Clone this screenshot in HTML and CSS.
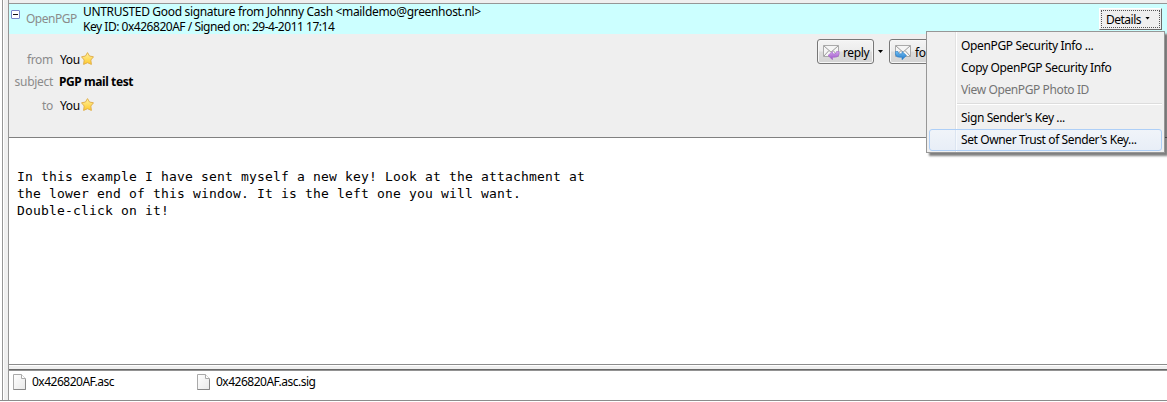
FILE: index.html
```html
<!DOCTYPE html>
<html lang="en">
<head>
<meta charset="utf-8">
<title>PGP mail test</title>
<link rel="stylesheet" href="styles.css">
</head>
<body>
<svg class="defs" width="0" height="0" aria-hidden="true">
  <defs>
    <linearGradient id="gold" x1="0" y1="0" x2="0" y2="1"><stop offset="0" stop-color="#fff2a0"/><stop offset="1" stop-color="#ffc928"/></linearGradient>
    <linearGradient id="purple" x1="0" y1="0" x2="0" y2="1"><stop offset="0" stop-color="#d3a5ec"/><stop offset="1" stop-color="#9a50c8"/></linearGradient>
    <linearGradient id="blue" x1="0" y1="0" x2="0" y2="1"><stop offset="0" stop-color="#72c0f2"/><stop offset="1" stop-color="#1f74c8"/></linearGradient>
    <linearGradient id="sheet" x1="0" y1="0" x2="1" y2="1"><stop offset="0" stop-color="#fff"/><stop offset="1" stop-color="#e9e9e9"/></linearGradient>
    <symbol id="star" viewBox="0 0 13 13"><path d="M6.500.6 8.500 4l4 .8-2.700 3.200.6 4.400-3.900-1.700-3.900 1.700.6-4.400L.5 4.800l4-.8z" fill="url(#gold)" stroke="#e0b050" stroke-width="1" stroke-linejoin="round"/></symbol>
    <symbol id="envelope" viewBox="0 0 17 15"><path d="M.5.500h15v11H.5z" fill="#f5f5f5" stroke="#aaa"/><path d="M.8.800 8 7.200 15.200.8M.8 11.200l5-5.500m9.400 5.500-5-5.500" fill="none" stroke="#999" stroke-width="1"/></symbol>
    <symbol id="file" viewBox="0 0 13 16"><path d="M.5.5h8l4 4v11H.5z" fill="url(#sheet)" stroke="#aaa"/><path d="M8.5.5v4h4" fill="#fff" stroke="#aaa"/><path d="M.5 15.5h12v-10" fill="none" stroke="#888"/></symbol>
  </defs>
</svg>
<div class="window">
  <div class="edge"></div>
  <main class="pane">
    <header class="security">
      <span class="toggle"></span>
      <span class="label pgp">OpenPGP</span>
      <div class="status">
        <div class="t-sign">UNTRUSTED Good signature from Johnny Cash &lt;maildemo@greenhost.nl&gt;</div>
        <div class="t-key">Key ID: 0x426820AF / Signed on: 29-4-2011 17:14</div>
      </div>
      <div class="details"><span class="t-details">Details</span><i class="caret"></i></div>
    </header>
    <section class="headers">
      <div class="fields">
        <div class="field from"><span class="label">from</span><span class="value">You</span><svg class="star" width="13" height="13"><use href="#star"/></svg></div>
        <div class="field subject"><span class="label">subject</span><b class="value">PGP mail test</b></div>
        <div class="field to"><span class="label">to</span><span class="value">You</span><svg class="star" width="13" height="13"><use href="#star"/></svg></div>
      </div>
      <div class="actions">
        <div class="button"><svg width="17" height="15" viewBox="0 0 17 15"><use href="#envelope" width="17" height="15"/><path d="m5 10.5 4.500-4v2.300h2.300q1.700 0 1.700-2.300h2.600q.8 5.700-4.300 5.700H9.500v2.500z" fill="url(#purple)" stroke="#a566ca" stroke-width=".6"/></svg><span>reply</span></div>
        <i class="caret"></i>
        <div class="button forward"><svg width="17" height="15" viewBox="0 0 17 15"><use href="#envelope" width="17" height="15"/><path d="M11.500 10.500 7 6.500v2.300H4.700Q3 8.800 3 6.500H.4q-.8 5.700 4.300 5.700H7v2.500z" fill="url(#blue)" stroke="#2b7ec7" stroke-width=".6"/></svg><span>forward</span></div>
      </div>
    </section>
    <article class="message">In this example I have sent myself a new key! Look at the attachment at
the lower end of this window. It is the left one you will want.
Double-click on it!</article>
    <div class="splitter"></div>
    <footer class="attachments">
      <div class="attachment"><svg width="13" height="16"><use href="#file"/></svg><span class="t-asc">0x426820AF.asc</span></div>
      <div class="attachment"><svg width="13" height="16"><use href="#file"/></svg><span class="t-asc">0x426820AF.asc.sig</span></div>
    </footer>
  </main>
  <nav class="menu">
    <div class="item"><span>OpenPGP Security Info ...</span></div>
    <div class="item"><span>Copy OpenPGP Security Info</span></div>
    <div class="item disabled"><span class="t-photo">View OpenPGP Photo ID</span></div>
    <hr>
    <div class="item"><span class="t-signkey">Sign Sender's Key ...</span></div>
    <div class="item active"><span class="t-trust">Set Owner Trust of Sender's Key...</span></div>
  </nav>
</div>
</body>
</html>
```
FILE: styles.css
```css
* { box-sizing: border-box; }
body { margin: 0; background: #fff; color: #000; font: 12px/15px "Noto Sans", "Open Sans", sans-serif; letter-spacing: -0.35px; overflow: hidden; }
.defs { position: absolute; }
.window { position: relative; display: flex; width: 1167px; height: 401px; border-bottom: 1px solid #8c8c8c; }
.edge { width: 8px; flex: none; border-left: 2px solid #fff; background: linear-gradient(90deg, #969696 1px, #fff 1px, #fff 2px, #efefef 2px); }
.pane { flex: 1; display: flex; flex-direction: column; min-width: 0; border-left: 1px solid #969696; box-shadow: inset 0 3px #efefef; padding-top: 3px; }
.security { display: flex; height: 31px; flex: none; border-top: 1px solid #969696; background: #cff; }
.toggle { width: 9px; height: 9px; margin: 6px 6px 0 2px; border: 1px solid #7886c8; border-radius: 1px; background: linear-gradient(#111, #111) center / 5px 1px no-repeat #fff; }
.label { color: #8b8b8b; }
.pgp { width: 57px; padding-top: 7px; letter-spacing: -0.5px; }
.status { flex: 1; line-height: 15px; white-space: nowrap; }
.t-sign { letter-spacing: -0.325px; }
.t-key { letter-spacing: -0.475px; }
.details { display: flex; align-items: center; gap: 4px; width: 63px; height: 22px; margin: 4px 5px 0 0; padding-left: 6px; border: 1px solid; border-color: #fff #696969 #696969 #fff; background: #efefef; outline: 1px dotted #555; outline-offset: -3px; }
.t-details { letter-spacing: -0.5px; }
.details .caret { margin-bottom: 2px; }
.caret { width: 5px; height: 3px; background: #000; clip-path: polygon(0 0, 100% 0, 50% 100%); }
.headers { display: flex; justify-content: space-between; height: 104px; flex: none; background: #efefef; border-bottom: 1px solid #808080; }
.fields { padding-top: 18px; }
.field { display: flex; height: 22px; }
.field .label { width: 44px; margin-right: 7px; text-align: right; letter-spacing: -0.3px; }
.subject { height: 24px; }
.subject .value { margin-left: -1px; letter-spacing: -0.42px; }
.star { margin: 0 0 0 1px; }
.actions { display: flex; width: 350px; padding-top: 5px; }
.button { display: flex; align-items: center; gap: 3px; width: 57px; height: 25px; padding: 2px 0 0 5px; border: 1px solid #777; border-radius: 3px; background: linear-gradient(#f4f4f4, #ececec 48%, #dcdcdc 52%, #d4d4d4); box-shadow: inset 0 0 0 1px #f7f7f7; }
.forward { width: 75px; }
.actions .caret { margin: 11px 6px 0 4px; }
.message { flex: none; height: 226px; padding: 30px 8px 0; white-space: pre; font: 13px/17px "DejaVu Sans Mono", monospace; letter-spacing: 0.173px; }
.splitter { height: 7px; flex: none; background: linear-gradient(#8c8c8c 1px, #fff 1px, #fff 2px, #efefef 2px, #efefef 5px, #686868 5px, #686868 6px, #929292 6px); }
.attachments { display: flex; padding: 3px 0 0 4px; }
.attachment { display: flex; gap: 6px; width: 184px; }
.t-asc { letter-spacing: -0.5px; }
.menu { position: absolute; left: 926px; top: 31px; width: 239px; height: 122px; padding: 3px 2px; border: 1px solid #979797; background: linear-gradient(90deg, transparent 28px, #e2e2e2 28px, #e2e2e2 29px, #fff 29px, #fff 30px, transparent 30px) #f0f0f0; box-shadow: 3px 3px 2px rgba(0, 0, 0, .5); }
.item { height: 22px; padding: 3px 0 0 32px; border: 0; white-space: nowrap; }
.disabled { color: #747474; }
.t-photo, .t-signkey, .t-trust { letter-spacing: -0.39px; }
.menu hr { height: 2px; margin: 2px 0 2px 28px; border: 0; border-top: 1px solid #ddd; border-bottom: 1px solid #fff; }
.active { border: 1px solid #aecff7; border-radius: 3px; padding: 2px 0 0 31px; background: linear-gradient(90deg, transparent 25px, #dce5f1 25px, #dce5f1 26px, #f5f9fd 26px, #f5f9fd 27px, transparent 27px), linear-gradient(#f0f4f9, #e8eef7); }
```
